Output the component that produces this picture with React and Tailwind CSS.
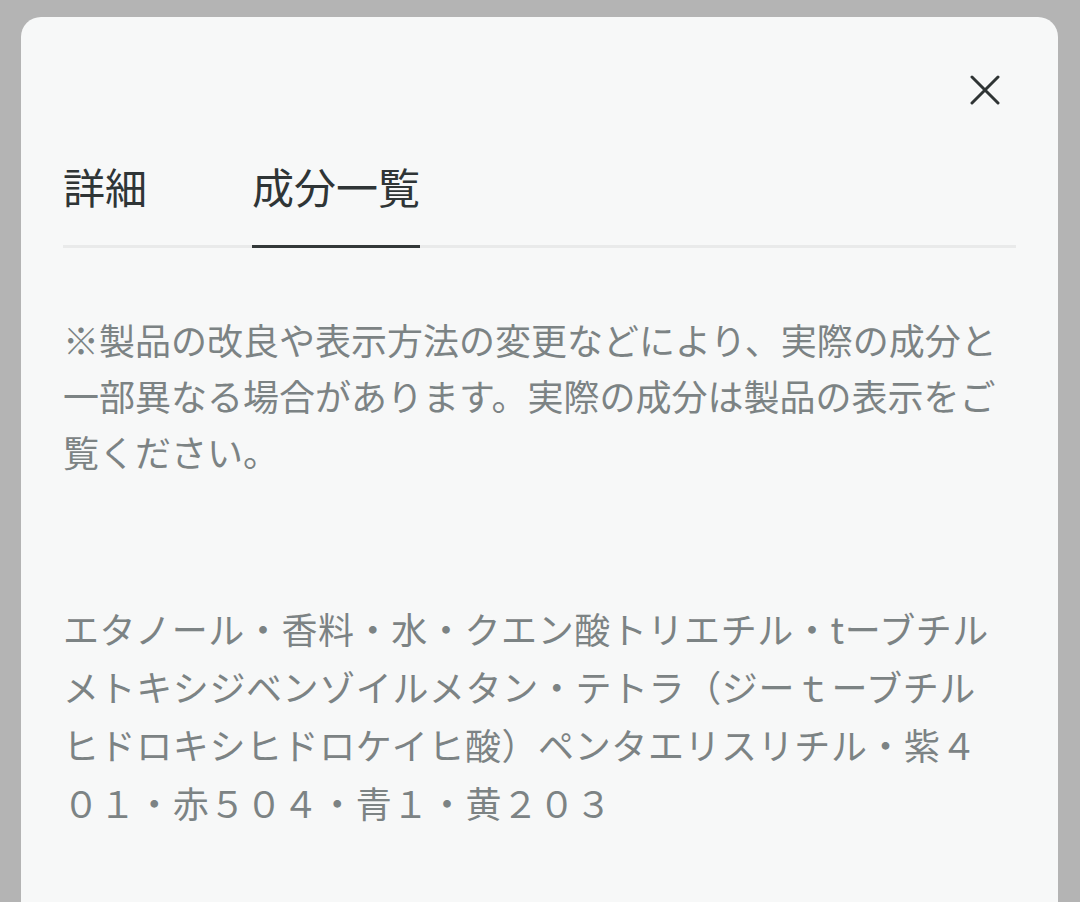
import React, { useState } from "react";

const notice = [
  "※製品の改良や表示方法の変更などにより、実際の成分と",
  "一部異なる場合があります。実際の成分は製品の表示をご",
  "覧ください。",
];

const ingredients = [
  "エタノール・香料・水・クエン酸トリエチル・tーブチル",
  "メトキシジベンゾイルメタン・テトラ（ジーｔーブチル",
  "ヒドロキシヒドロケイヒ酸）ペンタエリスリチル・紫４",
  "０１・赤５０４・青１・黄２０３",
];

function CloseIcon() {
  return (
    <svg width="30" height="30" viewBox="0 0 30 30" fill="none">
      <path
        d="M2 2 L28 28 M28 2 L2 28"
        stroke="#2f3435"
        strokeWidth="3"
        strokeLinecap="round"
      />
    </svg>
  );
}

function App() {
  const [tab, setTab] = useState("ingredients");

  return (
    <div
      className="min-h-screen bg-[#b4b4b4] pt-[17px] pl-[21px] pr-[22px] overflow-hidden"
      style={{ fontFamily: '"Noto Sans CJK JP", "Noto Sans", sans-serif' }}
    >
      <div className="min-h-[885px] rounded-t-[20px] bg-[#f7f8f8] px-[42px]">
        <div className="flex justify-end pt-[58px] pr-[16px]">
          <button className="block h-[30px] w-[30px]">
            <CloseIcon />
          </button>
        </div>

        <div className="mt-[49px] flex gap-[105px] border-b-[3px] border-[#e9eaea]">
          <button
            onClick={() => setTab("details")}
            className={
              tab === "details"
                ? "-mb-[3px] border-b-[3px] border-[#333839] pb-[28px] text-[42px] leading-[63px] font-normal text-[#2f3536]"
                : "pb-[28px] text-[42px] leading-[63px] font-normal text-[#2f3536]"
            }
          >
            詳細
          </button>
          <button
            onClick={() => setTab("ingredients")}
            className={
              tab === "ingredients"
                ? "-mb-[3px] border-b-[3px] border-[#333839] pb-[28px] text-[42px] leading-[63px] font-normal text-[#2f3536]"
                : "pb-[28px] text-[42px] leading-[63px] font-normal text-[#2f3536]"
            }
          >
            成分一覧
          </button>
        </div>

        <div className="mt-[63px] text-[36px] leading-[56px] text-[#7c8384]">
          {notice.map((line) => (
            <div key={line} className="whitespace-nowrap">
              {line}
            </div>
          ))}
        </div>

        <div className="mt-[120px] text-[36px] leading-[58px] tracking-[0.6px] text-[#7c8384]">
          {ingredients.map((line) => (
            <div key={line} className="whitespace-nowrap">
              {line}
            </div>
          ))}
        </div>
      </div>
    </div>
  );
}

export default App;
